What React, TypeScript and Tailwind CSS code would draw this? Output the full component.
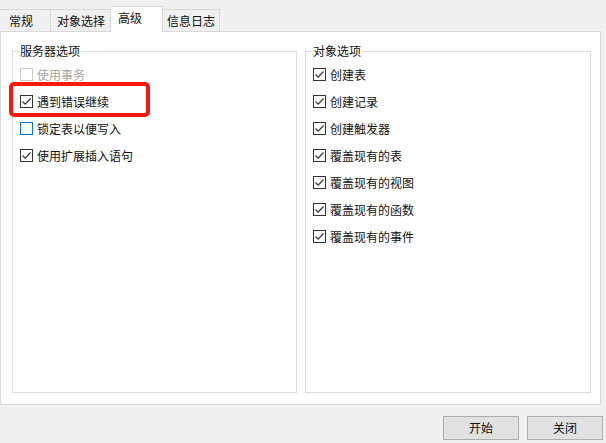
import React from 'react';

type Opt = { label: string; checked: boolean; disabled?: boolean; focused?: boolean };

const serverOptions: Opt[] = [
  { label: '使用事务', checked: false, disabled: true },
  { label: '遇到错误继续', checked: true },
  { label: '锁定表以便写入', checked: false, focused: true },
  { label: '使用扩展插入语句', checked: true },
];

const objectOptions: Opt[] = [
  { label: '创建表', checked: true },
  { label: '创建记录', checked: true },
  { label: '创建触发器', checked: true },
  { label: '覆盖现有的表', checked: true },
  { label: '覆盖现有的视图', checked: true },
  { label: '覆盖现有的函数', checked: true },
  { label: '覆盖现有的事件', checked: true },
];

const CheckRow: React.FC<{ opt: Opt }> = ({ opt }) => {
  const boxBorder = opt.disabled
    ? 'border-[#cccccc]'
    : opt.focused
    ? 'border-[#0078d7]'
    : 'border-[#333333]';
  return (
    <div className="h-[27px] flex items-center">
      <span className={`w-[13px] h-[13px] border ${boxBorder} bg-white flex items-center justify-center shrink-0`}>
        {opt.checked && (
          <svg width="11" height="11" viewBox="0 0 11 11">
            <path d="M1.5 5.5 L4.2 8.2 L9.5 2.5" fill="none" stroke="#333333" strokeWidth="1.2" />
          </svg>
        )}
      </span>
      <span className={`ml-[4px] ${opt.disabled ? 'text-[#a6a6a6]' : 'text-[#111111]'}`}>{opt.label}</span>
    </div>
  );
};

const GroupBox: React.FC<{ title: string; options: Opt[]; className: string }> = ({ title, options, className }) => (
  <fieldset className={`border border-[#dcdcdc] pl-[7px] ${className}`}>
    <legend className="-ml-px px-[1px] leading-[16px] text-[#111111]">{title}</legend>
    <div className="pt-[2px]">
      {options.map((o) => (
        <CheckRow key={o.label} opt={o} />
      ))}
    </div>
  </fieldset>
);

export default function App() {
  return (
    <div
      className="relative w-[606px] h-[443px] bg-[#f0f0f0] text-[12px] text-[#111111] flex flex-col overflow-hidden"
      style={{ fontFamily: '"Microsoft YaHei", "Noto Sans CJK SC", sans-serif' }}
    >
      {/* Tabs */}
      <div className="h-[31px] flex items-end">
        <div className="w-[51px] h-[22px] border-t border-r border-[#d9d9d9] pl-[9px] flex items-center">常规</div>
        <div className="w-[60px] h-[22px] border-t border-r border-[#d9d9d9] pl-[6px] flex items-center">对象选择</div>
        <div className="relative z-10 w-[52px] h-[26px] -mb-px bg-white border-t border-r border-[#d9d9d9] pl-[7px] pb-[3px] flex items-center">
          高级
        </div>
        <div className="w-[57px] h-[22px] border-t border-r border-[#d9d9d9] pl-[4px] flex items-center">信息日志</div>
      </div>

      {/* Tab page */}
      <div className="w-[601px] h-[374px] bg-white border border-[#d9d9d9] pl-[11px] pr-[9px] pt-[11px] pb-[11px] flex gap-[8px]">
        <GroupBox title="服务器选项" options={serverOptions} className="w-[285px]" />
        <GroupBox title="对象选项" options={objectOptions} className="w-[286px]" />
      </div>

      {/* Buttons */}
      <div className="flex justify-end gap-[8px] pr-[3px] pt-[11px]">
        <button className="w-[76px] h-[24px] bg-[#e1e1e1] border border-[#adadad]">开始</button>
        <button className="w-[76px] h-[24px] bg-[#e1e1e1] border border-[#adadad]">关闭</button>
      </div>

      {/* Annotation */}
      <div className="absolute left-[9px] top-[82px] w-[141px] h-[35px] border-[4px] border-[#f5180c] rounded-[5px]" />
    </div>
  );
}
